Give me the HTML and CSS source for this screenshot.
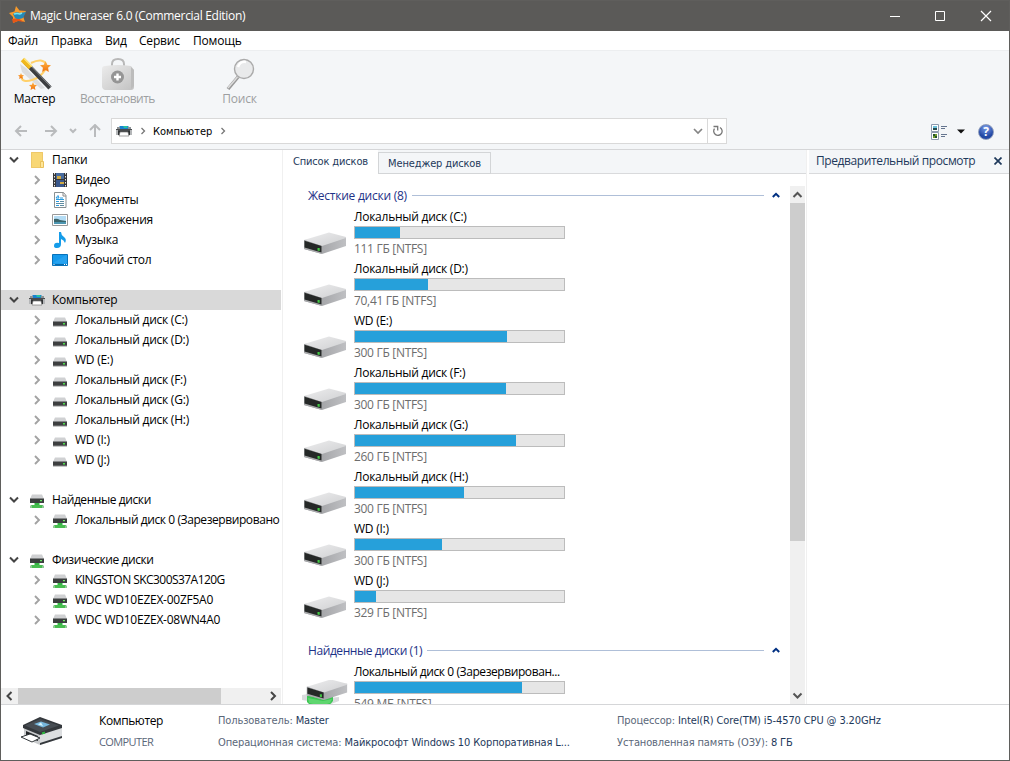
FILE: index.html
```html
<!DOCTYPE html>
<html lang="ru">
<head>
    <meta charset="UTF-8">
    <title>Magic Uneraser 6.0 (Commercial Edition)</title>
    <link rel="stylesheet" href="styles.css">
</head>
<body>
    <svg class="defs" width="0" height="0">
        <defs>
            <linearGradient id="metal" x1="0" y1="0" x2="1" y2="1"><stop offset="0" stop-color="#ededee"/><stop offset="1" stop-color="#cfd0d2"/></linearGradient>
            <linearGradient id="side" x1="0" y1="0" x2="1" y2="0"><stop offset="0" stop-color="#939497"/><stop offset="1" stop-color="#bfc0c3"/></linearGradient>
            <linearGradient id="star" x1="0" y1="0" x2="0" y2="1"><stop offset="0" stop-color="#ffb544"/><stop offset="1" stop-color="#f0700c"/></linearGradient>
            <linearGradient id="bag" x1="0" y1="0" x2="1" y2="1"><stop offset="0" stop-color="#ececec"/><stop offset="1" stop-color="#c2c2c2"/></linearGradient>
        </defs>
        <symbol id="down" viewBox="0 0 10 8"><path d="M1 1.500l4 4 4-4" fill="none" stroke="#444" stroke-width="2"/></symbol>
        <symbol id="right" viewBox="0 0 8 10"><path d="M2 1l4 4-4 4" fill="none" stroke="#a2a2a2" stroke-width="1.900"/></symbol>
        <symbol id="drive" viewBox="0 0 16 16">
            <path d="M3 5.500h10l2 4.500H1z" fill="#d0d1d3"/><path d="M1 9.500h14v4.500H1z" fill="#3d3f40"/>
            <path d="M1 13.500h14v1H1z" fill="#8d8e8f"/><path d="M11 11h2v1.500h-2z" fill="#4fe04b"/>
        </symbol>
        <symbol id="netdrive" viewBox="0 0 16 16">
            <path d="M3 .5h10L15 5H1z" fill="#cfd0d2"/><path d="M1 4.500h14V9H1z" fill="#3b3e3e"/><path d="M11 6h2v1.300h-2z" fill="#69e665"/>
            <path d="M5.500 9h5v3h-5z" fill="#35b545"/><path d="M2 11h12v3H2z" fill="#48bd50"/><path d="M1 11.500h2V14H1zM13 11.500h2V14h-2z" fill="#8fc995"/>
        </symbol>
        <symbol id="computer" viewBox="0 0 16 14">
            <path d="M3 3l1-1h8l1 1v3H3z" fill="#1781d0"/><path d="M7 2h4l1 2H8z" fill="#28c1a0"/>
            <path d="M1 3h3v3H1zM12 3h3v3h-3z" fill="#8d9296"/><path d="M0 5h16v3H0z" fill="#494c4e"/>
            <path d="M0 6h2v5H0zM14 6h2v5h-2z" fill="#b4b6b8"/><path d="M2 7h2v4H2zM12 7h2v4h-2z" fill="#303335"/><path d="M4 8h8l1 4H3z" fill="#fff" stroke="#666" stroke-width=".6"/>
        </symbol>
        <symbol id="bigdrive" viewBox="0 0 44 24">
            <path d="M1 9v9l18 5 24-8V6z" fill="url(#side)"/>
            <path d="M1 9L26 1.500 43 6v1L19 15z" fill="url(#metal)"/>
            <path d="M1 9l18 6v8L1 18z" fill="#a9aaac"/>
            <path d="M1.500 9.800L18.500 15v6.500L1.500 16.500z" fill="#252827"/><path d="M14.500 17h2.200v3l-2.200-.5z" fill="#43c845"/>
        </symbol>
        <symbol id="page-arrow" viewBox="0 0 14 12"><path d="M7 1L2 6l5 5M2 6h11" fill="none" stroke="#b9bbbd" stroke-width="2"/></symbol>
        <symbol id="starlet" viewBox="0 0 20 20"><path d="M10 0l2.800 6.600L20 7.500l-5.300 4.800L16 20l-6-3.700L4 20l1.300-7.700L0 7.500l7.200-.9z" fill="url(#star)"/></symbol>
        <symbol id="up" viewBox="0 0 8 6"><path d="M.8 5L4 1.800 7.200 5" fill="none" stroke="currentColor" stroke-width="2"/></symbol>
    </svg>

    <div class="window">
        <div class="titlebar">
            <svg class="app-icon" width="18" height="18" viewBox="0 0 18 18">
                <path d="M7 0l3.500 4.500L17 5l-3 5 2 6-6-1.500L4 17V11L0 7l5.500-1.500z" fill="#f79a2b"/>
                <path d="M3 13l6-1 6 4-6-1-5 2z" fill="#e75717"/>
                <path d="M4 8q3-3 7-1l6-1-3 6q-5 2-8 0z" fill="#2489b8"/><path d="M5 8q3-1 6 0l2-1" fill="none" stroke="#78e5ed" stroke-width="1.500"/>
            </svg>
            <span class="title">Magic Uneraser 6.0 (Commercial Edition)</span>
            <div class="window-buttons">
                <svg width="46" height="30"><path d="M18 15.500h10" stroke="#fff"/></svg>
                <svg width="46" height="30"><path d="M17.500 10.500h9v9h-9z" fill="none" stroke="#fff"/></svg>
                <svg width="46" height="30"><path d="M17 10l10 10M27 10L17 20" stroke="#fff" stroke-width="1.200"/></svg>
            </div>
        </div>
        <div class="menubar"><span class="m1">Файл</span><span class="m2">Правка</span><span class="m3">Вид</span><span class="m4">Сервис</span><span>Помощь</span></div>

        <div class="toolbar">
            <div class="tool wizard">
                <svg width="36" height="36" viewBox="0 0 36 36">
                    <path d="M3 7l6 4 19 20-4 1L5 15z" fill="#c9cbcd" opacity=".6"/>
                    <path d="M14 6c8-4 13-3 15 1 2 6-7 14-14 16-6 2-11 1-10-3" fill="none" stroke="#ffd06a" stroke-width="2"/>
                    <path d="M8 5l25 26" stroke="#3c3e40" stroke-width="4.500"/><path d="M11 6l23 24" stroke="#85888a" stroke-width="1"/>
                    <path d="M5.500 2.500l8 8" stroke="#f1b81e" stroke-width="5"/><path d="M7 1.500l8 8" stroke="#ffe77e" stroke-width="1.500"/>
                    <use href="#starlet" x="23" y="4" width="11" height="11"/><use href="#starlet" x="1" y="16" width="6" height="6"/><use href="#starlet" x="12" y="25" width="8" height="8"/>
                </svg>
                <span>Мастер</span>
            </div>
            <div class="tool restore off">
                <svg width="36" height="36" viewBox="0 0 36 36">
                    <path d="M12 10V7q0-5 6-5t6 5v3" fill="none" stroke="#b8b8b8" stroke-width="2"/>
                    <path d="M5 9q13-2 26 0l3 4v17q0 3-3 3H5q-3-1-3-4V12q0-3 3-3z" fill="url(#bag)"/>
                    <path d="M31 10v22l3-3V13z" fill="#bcbcbc"/>
                    <circle cx="17.500" cy="20" r="6.500" fill="#959595"/><path d="M17.500 16.500v7M14 20h7" stroke="#fff" stroke-width="2.400"/>
                </svg>
                <span>Восстановить</span>
            </div>
            <div class="tool search off">
                <svg width="36" height="36" viewBox="0 0 36 36">
                    <path d="M16 20L6 32" stroke="#999" stroke-width="3.500"/><path d="M15.500 20L6 31" stroke="#ddd" stroke-width="1.500"/>
                    <circle cx="22" cy="12" r="9.500" fill="#e9eaeb" stroke="#aaa" stroke-width="1.400"/>
                    <path d="M16 10q2-6 8-5" fill="none" stroke="#fff" stroke-width="2.500"/>
                </svg>
                <span>Поиск</span>
            </div>
        </div>

        <div class="navbar">
            <svg class="back" width="14" height="12"><use href="#page-arrow"/></svg>
            <svg class="forward" width="14" height="12"><use href="#page-arrow"/></svg>
            <svg class="recent" width="8" height="6" viewBox="0 0 8 6"><path d="M1 1l3 3 3-3" fill="none" stroke="#b9bbbd" stroke-width="2"/></svg>
            <svg class="parent" width="12" height="13" viewBox="0 0 12 13"><path d="M1 6l5-5 5 5M6 1v12" fill="none" stroke="#b9bbbd" stroke-width="2"/></svg>
            <div class="address">
                <svg width="16" height="14"><use href="#computer"/></svg>
                <svg class="crumb" width="6" height="8" viewBox="0 0 6 8"><path d="M1.500 1l3 3-3 3" fill="none" stroke="#777" stroke-width="1.300"/></svg>
                <span>Компьютер</span>
                <svg class="crumb" width="6" height="8" viewBox="0 0 6 8"><path d="M1.500 1l3 3-3 3" fill="none" stroke="#777" stroke-width="1.300"/></svg>
                <svg class="drop" width="10" height="8" viewBox="0 0 10 8"><path d="M1 2l4 4 4-4" fill="none" stroke="#858585" stroke-width="1.700"/></svg>
                <div class="refresh"><svg width="12" height="14" viewBox="0 0 12 14"><path d="M9 3.500a4.200 4.200 0 1 1-5.500 1.200M2.500 2.500h4.200v4" fill="none" stroke="#777" stroke-width="1.300"/></svg></div>
            </div>
            <div class="view-tools">
                <svg width="17" height="16" viewBox="0 0 17 16">
                    <path d="M.5.500h7v7h-7zM.5 8.500h7v7h-7z" fill="#fff" stroke="#8c9aae"/>
                    <path d="M2 2h4v2H2z" fill="#6ec2dc"/><path d="M2 4h4v2H2z" fill="#284b4d"/><path d="M2 10h4v4H2z" fill="#6a9a29"/><path d="M2 10h2v2H2zM4 12h2v2H4z" fill="#244f2d"/>
                    <path d="M10 2.500h6M10 4.500h4M10 10.500h6M10 12.500h4" stroke="#65758f"/>
                </svg>
                <svg width="8" height="5" viewBox="0 0 8 5"><path d="M0 .5h8L4 4.500z" fill="#111"/></svg>
                <div class="help">?</div>
            </div>
        </div>

        <div class="main">
            <div class="sidebar">
                <div class="tree">
                    <div class="node"><svg class="toggle" width="10" height="8"><use href="#down"/></svg><svg width="16" height="16" viewBox="0 0 16 16"><path d="M2 0h12v16H2z" fill="#f8d775"/><path d="M2.500.500h11v15h-11z" fill="none" stroke="#eec869"/><path d="M11.500 9.500h3v6h-3z" fill="#ffe798" stroke="#e9c05c"/></svg><span>Папки</span></div>
                    <div class="node sub"><svg class="toggle" width="8" height="10"><use href="#right"/></svg><svg width="16" height="16" viewBox="0 0 16 16"><path d="M1 1h14v14H1z" fill="#353638"/><path d="M4 1h8v6H4z" fill="#496c9e"/><path d="M4 8h8v7H4z" fill="#39578b"/><path d="M5 4h4v3H5zM8 10h4v2H8z" fill="#d0a942"/><path d="M2.500 1v14M13.500 1v14" stroke="#e8e8e8" stroke-dasharray="1.500 1.500"/></svg><span>Видео</span></div>
                    <div class="node sub"><svg class="toggle" width="8" height="10"><use href="#right"/></svg><svg width="16" height="16" viewBox="0 0 16 16"><path d="M2.500.500h9l2.500 3v12H2.500z" fill="#fff" stroke="#888f91"/><path d="M11 .5V4h3" fill="none" stroke="#888"/><path d="M4 7.500h8M4 9.500h3M4 13.500h3M6 3.500L4 6h3zM8 6h3" fill="none" stroke="#279ae0"/><path d="M8 9.500h4M4 11.500h8M8 13.500h4" stroke="#5e8ca1"/></svg><span>Документы</span></div>
                    <div class="node sub"><svg class="toggle" width="8" height="10"><use href="#right"/></svg><svg width="16" height="16" viewBox="0 0 16 16"><path d="M.5 2.500h15v11H.5z" fill="#fff" stroke="#999"/><path d="M2 4h12v8H2z" fill="#b4dcf4"/><path d="M2 7q3-1 6 1l6 1v1H2z" fill="#3b656b"/><path d="M2 10h12v2H2z" fill="#4d96b1"/></svg><span>Изображения</span></div>
                    <div class="node sub"><svg class="toggle" width="8" height="10"><use href="#right"/></svg><svg width="16" height="16" viewBox="0 0 16 16"><path d="M7 0h2q0 3 3 5t1 6q-1-3-4-4v5q0 4-4 4-3 0-3-2 0-4 5-3z" fill="#159ce9"/></svg><span>Музыка</span></div>
                    <div class="node sub"><svg class="toggle" width="8" height="10"><use href="#right"/></svg><svg width="16" height="16" viewBox="0 0 16 16"><path d="M.5 2.500h15v11H.5z" fill="#159aec" stroke="#0872ba"/><path d="M1 11L14 3h1v9z" fill="#26a2ef"/><path d="M1 12.500h14" stroke="#0869ab"/><path d="M1.500 12.500h2M12 12.500h3" stroke="#fff" stroke-dasharray="1 1"/></svg><span>Рабочий стол</span></div>

                    <div class="node root selected"><svg class="toggle" width="10" height="8"><use href="#down"/></svg><svg width="16" height="14"><use href="#computer"/></svg><span>Компьютер</span></div>
                    <div class="node sub"><svg class="toggle" width="8" height="10"><use href="#right"/></svg><svg class="hdd" width="16" height="16"><use href="#drive"/></svg><span>Локальный диск (C:)</span></div>
                    <div class="node sub"><svg class="toggle" width="8" height="10"><use href="#right"/></svg><svg class="hdd" width="16" height="16"><use href="#drive"/></svg><span>Локальный диск (D:)</span></div>
                    <div class="node sub"><svg class="toggle" width="8" height="10"><use href="#right"/></svg><svg class="hdd" width="16" height="16"><use href="#drive"/></svg><span>WD (E:)</span></div>
                    <div class="node sub"><svg class="toggle" width="8" height="10"><use href="#right"/></svg><svg class="hdd" width="16" height="16"><use href="#drive"/></svg><span>Локальный диск (F:)</span></div>
                    <div class="node sub"><svg class="toggle" width="8" height="10"><use href="#right"/></svg><svg class="hdd" width="16" height="16"><use href="#drive"/></svg><span>Локальный диск (G:)</span></div>
                    <div class="node sub"><svg class="toggle" width="8" height="10"><use href="#right"/></svg><svg class="hdd" width="16" height="16"><use href="#drive"/></svg><span>Локальный диск (H:)</span></div>
                    <div class="node sub"><svg class="toggle" width="8" height="10"><use href="#right"/></svg><svg class="hdd" width="16" height="16"><use href="#drive"/></svg><span>WD (I:)</span></div>
                    <div class="node sub"><svg class="toggle" width="8" height="10"><use href="#right"/></svg><svg class="hdd" width="16" height="16"><use href="#drive"/></svg><span>WD (J:)</span></div>

                    <div class="node root narrow"><svg class="toggle" width="10" height="8"><use href="#down"/></svg><svg class="net" width="16" height="16"><use href="#netdrive"/></svg><span>Найденные диски</span></div>
                    <div class="node sub long"><svg class="toggle" width="8" height="10"><use href="#right"/></svg><svg class="net" width="16" height="16"><use href="#netdrive"/></svg><span>Локальный диск 0 (Зарезервировано</span></div>

                    <div class="node root narrow"><svg class="toggle" width="10" height="8"><use href="#down"/></svg><svg class="net" width="16" height="16"><use href="#netdrive"/></svg><span>Физические диски</span></div>
                    <div class="node sub caps"><svg class="toggle" width="8" height="10"><use href="#right"/></svg><svg class="net" width="16" height="16"><use href="#netdrive"/></svg><span>KINGSTON SKC300S37A120G</span></div>
                    <div class="node sub"><svg class="toggle" width="8" height="10"><use href="#right"/></svg><svg class="net" width="16" height="16"><use href="#netdrive"/></svg><span>WDC WD10EZEX-00ZF5A0</span></div>
                    <div class="node sub"><svg class="toggle" width="8" height="10"><use href="#right"/></svg><svg class="net" width="16" height="16"><use href="#netdrive"/></svg><span>WDC WD10EZEX-08WN4A0</span></div>
                </div>
                <div class="hscroll">
                    <svg width="17" height="16"><path d="M10.500 4L6.500 8l4 4" fill="none" stroke="#444" stroke-width="2"/></svg>
                    <div class="thumb"></div>
                    <svg width="17" height="16"><path d="M7 4l4 4-4 4" fill="none" stroke="#444" stroke-width="2"/></svg>
                </div>
            </div>

            <div class="content">
                <div class="tabs"><div class="tab active">Список дисков</div><div class="tab">Менеджер дисков</div></div>
                <div class="list-wrap">
                    <div class="list">
                        <div class="group"><span>Жесткие диски (8)</span><hr><svg width="8" height="6"><use href="#up"/></svg></div>
                        <div class="disk"><svg width="44" height="24"><use href="#bigdrive"/></svg><div class="info"><div class="name">Локальный диск (C:)</div><div class="bar"><div class="fill" style="width:21.5%"></div></div><div class="size">111 ГБ [NTFS]</div></div></div>
                        <div class="disk"><svg width="44" height="24"><use href="#bigdrive"/></svg><div class="info"><div class="name">Локальный диск (D:)</div><div class="bar"><div class="fill" style="width:35%"></div></div><div class="size">70,41 ГБ [NTFS]</div></div></div>
                        <div class="disk"><svg width="44" height="24"><use href="#bigdrive"/></svg><div class="info"><div class="name">WD (E:)</div><div class="bar"><div class="fill" style="width:72.7%"></div></div><div class="size">300 ГБ [NTFS]</div></div></div>
                        <div class="disk"><svg width="44" height="24"><use href="#bigdrive"/></svg><div class="info"><div class="name">Локальный диск (F:)</div><div class="bar"><div class="fill" style="width:72.2%"></div></div><div class="size">300 ГБ [NTFS]</div></div></div>
                        <div class="disk"><svg width="44" height="24"><use href="#bigdrive"/></svg><div class="info"><div class="name">Локальный диск (G:)</div><div class="bar"><div class="fill" style="width:77%"></div></div><div class="size">260 ГБ [NTFS]</div></div></div>
                        <div class="disk"><svg width="44" height="24"><use href="#bigdrive"/></svg><div class="info"><div class="name">Локальный диск (H:)</div><div class="bar"><div class="fill" style="width:52.2%"></div></div><div class="size">300 ГБ [NTFS]</div></div></div>
                        <div class="disk"><svg width="44" height="24"><use href="#bigdrive"/></svg><div class="info"><div class="name">WD (I:)</div><div class="bar"><div class="fill" style="width:41.6%"></div></div><div class="size">300 ГБ [NTFS]</div></div></div>
                        <div class="disk"><svg width="44" height="24"><use href="#bigdrive"/></svg><div class="info"><div class="name">WD (J:)</div><div class="bar"><div class="fill" style="width:10.1%"></div></div><div class="size">329 ГБ [NTFS]</div></div></div>
                        <div class="group second narrow"><span>Найденные диски (1)</span><hr><svg width="8" height="6"><use href="#up"/></svg></div>
                        <div class="disk found"><svg width="48" height="30" viewBox="0 0 48 30"><path d="M1 15l6-1v7l-6-1zM28 18l10-1v4l-8 3z" fill="#d9dbdd"/><path d="M6 16l26 1v4l-6 7H12l-6-6z" fill="#3cc553"/><path d="M7 18l15 3 9-2-2 4-9 3-12-3z" fill="#5fd66f"/><use href="#bigdrive" x="4" y="-2" width="44" height="23"/></svg><div class="info"><div class="name long">Локальный диск 0 (Зарезервирован...</div><div class="bar"><div class="fill" style="width:80%"></div></div><div class="size">549 МБ [NTFS]</div></div></div>
                    </div>
                    <div class="vscroll">
                        <svg width="15" height="17"><path d="M3.500 11l4-4 4 4" fill="none" stroke="#555" stroke-width="2"/></svg>
                        <div class="thumb"></div>
                        <svg width="15" height="17"><path d="M3.500 6.500l4 4 4-4" fill="none" stroke="#555" stroke-width="2"/></svg>
                    </div>
                </div>
            </div>

            <div class="preview">
                <div class="preview-head"><span>Предварительный просмотр</span><svg width="8" height="8" viewBox="0 0 8 8"><path d="M.5.500l7 7M7.500.500l-7 7" stroke="#1e395b" stroke-width="1.700"/></svg></div>
            </div>
        </div>

        <div class="statusbar">
            <svg width="44" height="30" viewBox="0 0 44 30">
                <path d="M4 11l16 7v11L4 22z" fill="#c9cbcd"/><path d="M20 18l22-7v11l-22 7z" fill="#dcdee0"/>
                <path d="M3 9L20 1l22 8v3l-22 7L3 12z" fill="#34383c"/><path d="M5 9.500L20 3l19 6.500L20 16z" fill="#474d53"/>
                <path d="M14 8l7-2.500 9 3-7 3z" fill="#77b8dd"/><path d="M18 8.500l3-2 2 3.500z" fill="#d9f4fb"/>
                <path d="M6 15l12 5v5L6 21z" fill="#222629"/><path d="M1 21l9-3 10 4-8 4z" fill="#fff" stroke="#33383b"/><path d="M20 27l22-7v2l-22 7z" fill="#34383c"/>
                <path d="M22 17.500l3-1" stroke="#2db63e" stroke-width="2"/>
            </svg>
            <div class="host"><div class="host-name">Компьютер</div><div class="host-id">COMPUTER</div></div>
            <div class="facts"><div><label>Пользователь:</label> <b>Master</b></div><div><label>Операционная система:</label> <b>Майкрософт Windows 10 Корпоративная L...</b></div></div>
            <div class="facts"><div><label>Процессор:</label> <b>Intel(R) Core(TM) i5-4570 CPU @ 3.20GHz</b></div><div><label>Установленная память (ОЗУ):</label> <b>8 ГБ</b></div></div>
        </div>
    </div>
</body>
</html>
```
FILE: styles.css
```css
* { box-sizing: border-box; }
body {
    margin: 0;
    font-family: "Open Sans", "Noto Sans", sans-serif;
    font-size: 12px;
    letter-spacing: -0.25px;
    color: #000;
}
svg {
    display: block;
    flex-shrink: 0;
}
.defs {
    position: absolute;
}
.window {
    width: 1010px;
    height: 761px;
    border: 1px solid #5f5e5c;
    background: #fff;
    display: flex;
    flex-direction: column;
    overflow: hidden;
    white-space: nowrap;
}

/* title and menu */
.titlebar {
    height: 30px;
    background: #5b5a58;
    color: #fff;
    display: flex;
    align-items: center;
    padding-left: 8px;
}
.app-icon {
    margin-bottom: 2px;
}
.title {
    margin-left: 3px;
    padding-bottom: 2px;
    letter-spacing: -0.3px;
}
.window-buttons {
    display: flex;
    margin-left: auto;
    margin-right: -1px;
}
.menubar {
    height: 19px;
    display: flex;
    align-items: center;
    padding-left: 7px;
    letter-spacing: -0.2px;
}
.menubar .m1 { width: 43px; }
.menubar .m2 { width: 54px; }
.menubar .m3 { width: 34px; }
.menubar .m4 { width: 54px; }

/* toolbar */
.toolbar {
    height: 61px;
    background: #f4f6f8;
    border-top: 1px solid #eceef0;
    display: flex;
}
.tool {
    display: flex;
    flex-direction: column;
    align-items: center;
    padding-top: 6px;
}
.tool span {
    line-height: 16px;
    margin-top: -2px;
}
.tool.wizard { width: 67px; }
.tool.restore {
    width: 99px;
    letter-spacing: -0.5px;
}
.tool.search { width: 145px; }
.tool.off { color: #9d9fa1; }

.navbar {
    height: 39px;
    background: #f4f6f8;
    border-bottom: 1px solid #d5d6d8;
    display: flex;
    align-items: center;
    padding: 1px 15px 0 13px;
}
.forward {
    transform: scaleX(-1);
    margin-left: 16px;
}
.recent { margin-left: 11px; }
.parent { margin-left: 12px; }
.address {
    width: 616px;
    height: 26px;
    margin-left: 10px;
    border: 1px solid #d9d9d9;
    background: #fff;
    display: flex;
    align-items: center;
    padding-left: 4px;
}
.address span,
.tabs {
    font-family: "DejaVu Sans Condensed", "DejaVu Sans", sans-serif;
    font-stretch: condensed;
    font-size: 11px;
    letter-spacing: -0.15px;
}
.address span {
    padding-top: 1px;
    letter-spacing: 0;
}
.address .crumb { margin: 0 7px 0 8px; }
.address .drop { margin-left: auto; }
.refresh {
    width: 19px;
    height: 24px;
    margin-left: 4px;
    border-left: 1px solid #d9d9d9;
    display: flex;
    align-items: center;
    justify-content: center;
}
.view-tools {
    display: flex;
    align-items: center;
    margin-left: auto;
    padding-top: 2px;
    gap: 9px;
}
.help {
    width: 16px;
    height: 16px;
    margin-left: 4px;
    border-radius: 50%;
    border: 1px solid #8e9cbb;
    background: radial-gradient(circle at 50% 20%, #7b9eea, #2449a5 65%);
    color: #fff;
    font-weight: bold;
    font-size: 12px;
    line-height: 14px;
    text-align: center;
}

/* panels */
.main {
    height: 554px;
    display: flex;
}
.sidebar {
    width: 282px;
    border-right: 1px solid #f0f0f0;
    display: flex;
    flex-direction: column;
}
.tree {
    flex: 1;
    width: 280px;
    overflow: hidden;
}
.node {
    height: 20px;
    display: flex;
    align-items: center;
    padding-left: 8px;
}
.node .toggle {
    margin-right: 10px;
}
.node span {
    margin-left: 7px;
    padding-bottom: 2px;
}
.node.sub {
    padding-left: 32px;
}
.node.sub .toggle {
    margin-right: 11px;
}
.node.root {
    margin-top: 20px;
}
.node.selected {
    background: #d9d9d9;
}
.node.caps {
    letter-spacing: -0.55px;
}
.long,
.narrow {
    letter-spacing: -0.42px;
}
.net {
    transform: translateY(2px);
}
.hscroll {
    display: flex;
    width: 280px;
    height: 16px;
    background: #f0f0f0;
}
.hscroll .thumb {
    width: 203px;
    margin-right: auto;
    background: #cdcdcd;
}
.content {
    width: 524px;
    border-right: 1px solid #f0f0f0;
    display: flex;
    flex-direction: column;
}
.tabs {
    height: 24px;
    background: #f4f6f8;
    display: flex;
    align-items: flex-end;
    box-shadow: inset 0 -1px #d9dadc;
    color: #1e395b;
}
.tab {
    height: 22px;
    width: 113px;
    border: 1px solid #d3d5d7;
    background: #f4f6f8;
    text-align: center;
    line-height: 21px;
}
.tab.active {
    width: 95px;
    height: 24px;
    border: 0;
    background: #fff;
    line-height: 23px;
}
.list-wrap {
    flex: 1;
    min-height: 0;
    display: flex;
    padding-top: 12px;
}
.list {
    flex: 1;
    margin-top: -1px;
    overflow: hidden;
}
.group {
    height: 22px;
    display: flex;
    align-items: center;
    padding: 0 10px 2px 25px;
    color: #1e3287;
}
.group.second {
    margin-top: 17px;
}
.group hr {
    flex: 1;
    height: 1px;
    border: 0;
    margin: 0 8px 0 5px;
    background: #afbfd8;
}
.group svg {
    color: #003082;
}
.disk {
    height: 52px;
    display: flex;
    padding-left: 20px;
}
.disk > svg {
    margin-top: 24px;
}
.disk.found {
    padding-left: 18px;
}
.disk.found > svg {
    margin-top: 18px;
}
.info {
    width: 211px;
    margin-left: 7px;
}
.found .info {
    margin-left: 5px;
}
.name {
    height: 19px;
    line-height: 19px;
}
.bar {
    height: 13px;
    border: 1px solid #bcbcbc;
    background: #e6e6e6;
}
.fill {
    height: 100%;
    background: #26a0da;
}
.size {
    line-height: 20px;
    color: #6d6d6d;
    letter-spacing: -0.3px;
}
.vscroll {
    width: 15px;
    background: #f0f0f0;
    display: flex;
    flex-direction: column;
    margin-right: 1px;
}
.vscroll .thumb {
    height: 338px;
    margin-bottom: auto;
    background: #cdcdcd;
}
.preview {
    flex: 1;
    padding-left: 2px;
}
.preview-head {
    height: 24px;
    background: #f4f6f8;
    border-bottom: 1px solid #d9dadc;
    display: flex;
    align-items: center;
    justify-content: space-between;
    padding: 0 7px 2px 7px;
    color: #1e395b;
    letter-spacing: -0.4px;
}

/* computer details */
.statusbar {
    flex: 1;
    border-top: 1px solid #d5d6d8;
    display: flex;
    padding-left: 19px;
    line-height: 22px;
}
.statusbar > svg {
    margin-top: 11px;
}
.host {
    width: 119px;
    margin-left: 35px;
    padding-top: 5px;
    flex-shrink: 0;
}
.host-name {
    letter-spacing: -0.4px;
}
.host-id {
    font-size: 11px;
    line-height: 20px;
    letter-spacing: -0.6px;
}
.host-id,
.facts label {
    color: #5a6779;
}
.facts {
    width: 399px;
    padding-top: 5px;
    font-family: "DejaVu Sans Condensed", "DejaVu Sans", sans-serif;
    font-stretch: condensed;
    font-size: 11px;
    letter-spacing: -0.12px;
    flex-shrink: 0;
}
.facts b {
    font-weight: normal;
    color: #1e395b;
}
```
